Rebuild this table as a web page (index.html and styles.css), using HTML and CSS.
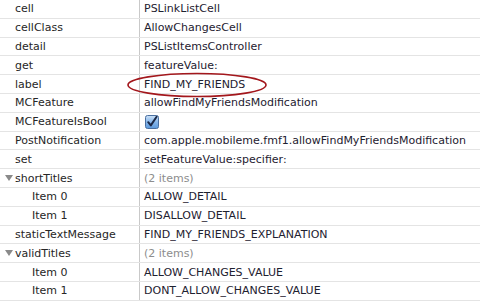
FILE: index.html
```html
<!DOCTYPE html>
<html>
<head>
<meta charset="utf-8">
<link rel="stylesheet" href="styles.css">
</head>
<body>
<div class="plist">
  <div class="row"><div class="key">cell</div><div class="val">PSLinkListCell</div></div>
  <div class="row"><div class="key">cellClass</div><div class="val">AllowChangesCell</div></div>
  <div class="row"><div class="key">detail</div><div class="val">PSListItemsController</div></div>
  <div class="row"><div class="key">get</div><div class="val">featureValue:</div></div>
  <div class="row"><div class="key">label</div><div class="val">FIND_MY_FRIENDS</div></div>
  <div class="row"><div class="key">MCFeature</div><div class="val">allowFindMyFriendsModification</div></div>
  <div class="row"><div class="key">MCFeatureIsBool</div><div class="val">
    <svg class="check" width="14" height="14" viewBox="0 0 14 14">
      <defs>
        <linearGradient id="cbFill" x1="0" y1="0" x2="0" y2="1">
          <stop offset="0" stop-color="#cfe3f8"/>
          <stop offset="0.5" stop-color="#86b6ea"/>
          <stop offset="1" stop-color="#5b98dc"/>
        </linearGradient>
      </defs>
      <rect x="0.5" y="0.5" width="13" height="13" rx="2" fill="url(#cbFill)" stroke="#4a6fa0"/>
      <path d="M3.2 7.2 L5.8 10.4 L11.6 1.8" fill="none" stroke="#1b2847" stroke-width="2" stroke-linecap="round" stroke-linejoin="round"/>
    </svg>
  </div></div>
  <div class="row"><div class="key">PostNotification</div><div class="val">com.apple.mobileme.fmf1.allowFindMyFriendsModification</div></div>
  <div class="row"><div class="key">set</div><div class="val">setFeatureValue:specifier:</div></div>
  <div class="row"><div class="key"><span class="tri"></span>shortTitles</div><div class="val muted">(2 items)</div></div>
  <div class="row"><div class="key sub">Item 0</div><div class="val">ALLOW_DETAIL</div></div>
  <div class="row"><div class="key sub">Item 1</div><div class="val">DISALLOW_DETAIL</div></div>
  <div class="row"><div class="key">staticTextMessage</div><div class="val">FIND_MY_FRIENDS_EXPLANATION</div></div>
  <div class="row"><div class="key"><span class="tri"></span>validTitles</div><div class="val muted">(2 items)</div></div>
  <div class="row"><div class="key sub">Item 0</div><div class="val">ALLOW_CHANGES_VALUE</div></div>
  <div class="row"><div class="key sub">Item 1</div><div class="val">DONT_ALLOW_CHANGES_VALUE</div></div>
  <svg class="mark" width="142" height="26" viewBox="0 0 142 26">
    <ellipse cx="71" cy="13" rx="69" ry="11.5" fill="none" stroke="#a3171c" stroke-width="1.6"/>
  </svg>
</div>
</body>
</html>
```
FILE: styles.css
```css
html, body {
  margin: 0;
  padding: 0;
  background: #ffffff;
}

.plist {
  position: relative;
  width: 480px;
  font-family: "DejaVu Sans", "Liberation Sans", sans-serif;
  font-size: 11px;
  color: #262626;
}

.row {
  display: flex;
  height: 18.8px;
  box-sizing: border-box;
  border-bottom: 1px solid #e4e4e4;
}

.key {
  width: 140px;
  flex: none;
  box-sizing: border-box;
  padding-left: 15px;
  border-right: 1px solid #c9c9c9;
  display: flex;
  align-items: center;
  white-space: nowrap;
}

.key.sub {
  padding-left: 32px;
}

/* disclosure triangle for expanded collections */
.tri {
  width: 0;
  height: 0;
  margin-left: -10px;
  margin-right: 2px;
  border-left: 4px solid transparent;
  border-right: 4px solid transparent;
  border-top: 6px solid #8a8a8a;
}

.val {
  flex: 1;
  padding-left: 4px;
  display: flex;
  align-items: center;
  white-space: nowrap;
  overflow: hidden;
  color: #1e2130;
}

.val.muted {
  color: #8d8d8d;
}

.check {
  margin-left: 1px;
}

/* hand-drawn highlight round the label value */
.mark {
  position: absolute;
  left: 126px;
  top: 72px;
}
```
